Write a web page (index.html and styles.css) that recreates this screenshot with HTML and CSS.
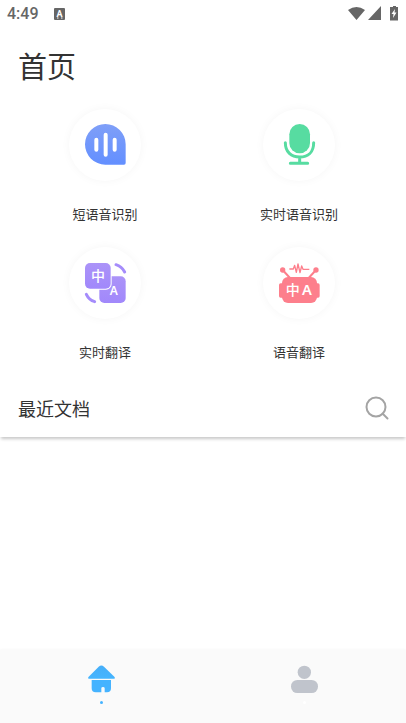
FILE: index.html
```html
<!DOCTYPE html>
<html lang="zh-CN">
<head>
<meta charset="utf-8">
<meta name="viewport" content="width=device-width, initial-scale=1">
<title>首页</title>
<link rel="stylesheet" href="styles.css">
</head>
<body>
<div class="status">
  <span class="time">4:49</span>
  <svg class="status-app" viewBox="0 0 11 12" width="11" height="12" aria-hidden="true">
    <rect width="11" height="12" rx="1" fill="#666"/>
    <text x="5.5" y="9" class="status-letter">A</text>
    <path d="M3 10h1.500M7 10h1.500" stroke="#fff"/>
  </svg>
  <svg class="status-icons" viewBox="0 0 52 16" width="52" height="16" aria-hidden="true">
    <path fill="#666" d="M0 4Q8.500-2 17 4L8.500 14ZM33 0V14H20Z"/>
    <path fill="#666" d="M45 0h3v1h2v13.500h-8V1h3Z"/>
    <path fill="#fff" d="M47 3l-3.500 5h2l-.5 4 3.500-5.500h-2Z"/>
  </svg>
</div>
<main>
  <h1>首页</h1>
  <div class="features">
    <a class="feature" href="#short">
      <svg class="disc" viewBox="27 27 216 216" aria-hidden="true">
        <defs><linearGradient id="blue" x2="0" y2="1"><stop stop-color="#7f9ff8"/><stop offset="1" stop-color="#638fff"/></linearGradient></defs>
        <path fill="url(#blue)" d="M136 72A61 61 0 1 0 136 194H192Q197 194 197 189V133A61 61 0 0 0 136 72Z"/>
        <path d="M109 119V149M137 104V164M164 119V149" stroke="#fff" stroke-width="12" stroke-linecap="round"/>
      </svg>
      <span>短语音识别</span>
    </a>
    <a class="feature" href="#live">
      <svg class="disc" viewBox="24 27 216 216" aria-hidden="true">
        <rect x="103" y="72" width="62" height="88" rx="31" fill="#57dca1"/>
        <path d="M91 128C91 156 109 171 134 171S176 156 176 128M134 171V190M106 190H158" fill="none" stroke="#57dca1" stroke-width="9" stroke-linecap="round"/>
      </svg>
      <span>实时语音识别</span>
    </a>
    <a class="feature" href="#translate">
      <svg class="disc" viewBox="27 27 216 216" aria-hidden="true">
        <defs><linearGradient id="violet" x2="0" y2="1"><stop stop-color="#ab93f8"/><stop offset="1" stop-color="#a188fb"/></linearGradient></defs>
        <rect x="118" y="115" width="79" height="80" rx="15" fill="url(#violet)"/>
        <rect x="73" y="73" width="82" height="82" rx="17" fill="#fff"/>
        <rect x="75" y="75" width="77" height="77" rx="15" fill="url(#violet)"/>
        <path d="M168 80Q185 85 194 102M79 169Q87 186 104 191" fill="none" stroke="#a58cfb" stroke-width="9" stroke-linecap="round"/>
        <text x="114" y="130" class="glyph glyph-cjk">中</text>
        <text x="161" y="172" class="glyph">A</text>
      </svg>
      <span>实时翻译</span>
    </a>
    <a class="feature" href="#voice">
      <svg class="disc" viewBox="24 27 216 216" aria-hidden="true">
        <g fill="#fd7f8c">
          <rect x="81" y="117" width="105" height="78" rx="18"/>
          <rect x="72" y="136" width="122" height="43" rx="5"/>
          <circle cx="83" cy="96" r="8"/><circle cx="183" cy="96" r="8"/>
        </g>
        <path d="M83 96L105 120M183 96L161 120" stroke="#fd7f8c" stroke-width="6"/>
        <path d="M103 93H115L119 82L124 103L129 78L135 104L140 84L144 94H163" fill="none" stroke="#fd7f8c" stroke-width="4" stroke-linejoin="round"/>
        <text x="113" y="171" class="glyph glyph-cjk">中</text>
        <text x="156" y="172" class="glyph glyph-large">A</text>
      </svg>
      <span>语音翻译</span>
    </a>
  </div>
  <div class="recent">
    <h2>最近文档</h2>
    <button class="search" type="button" aria-label="搜索">
      <svg viewBox="0 0 24 24" width="24" height="24" aria-hidden="true"><circle cx="11" cy="11" r="9.500"/><path d="M17.500 17.500L22.500 22.500"/></svg>
    </button>
  </div>
</main>
<nav class="tabs">
  <a class="tab active" href="#home" aria-label="首页">
    <svg viewBox="54 75 81 84" width="27" height="28" aria-hidden="true">
      <defs><linearGradient id="sky" x2="0" y2="1"><stop stop-color="#46aef8"/><stop offset="1" stop-color="#45b5ff"/></linearGradient></defs>
      <path fill="url(#sky)" d="M86 80Q94 73 102 80L133 110Q137 116 132 116H57Q52 116 56 110Z"/>
      <path fill="#45b3ff" d="M65 120H123V145Q123 157 111 157H104V145Q104 141 99 141T94 145V157H77Q65 157 65 145Z"/>
    </svg>
  </a>
  <a class="tab" href="#me" aria-label="我的">
    <svg viewBox="63 75 81 84" width="27" height="28" aria-hidden="true">
      <g fill="#c0c4cc"><circle cx="103" cy="97" r="20"/><rect x="63" y="120" width="81" height="39" rx="19"/></g>
    </svg>
  </a>
</nav>
</body>
</html>
```
FILE: styles.css
```css
* { box-sizing: border-box; }
body {
  margin: 0;
  min-height: 100vh;
  display: flex;
  flex-direction: column;
  background: #fff;
  color: #333;
  font-family: "Noto Sans CJK SC", sans-serif;
}
a { color: inherit; text-decoration: none; }
svg { display: block; }
h1, h2 { margin: 0; font-weight: 400; }
.status {
  display: flex;
  align-items: center;
  height: 28px;
  padding: 0 6px 0 7px;
}
.time {
  color: #666;
  font: 500 16px/28px Roboto, sans-serif;
}
.status-app { margin-left: 15px; }
.status-icons { margin-left: auto; }
.status-letter {
  fill: #fff;
  font: 700 9px Roboto, sans-serif;
  text-anchor: middle;
}
main { flex: 1; }
h1 {
  padding: 15px 18px 0;
  font-size: 29px;
  line-height: 44px;
}
.features {
  display: grid;
  grid-template-columns: 1fr 1fr;
  row-gap: 18px;
  padding: 22px 10px 0 8px;
}
.feature {
  display: flex;
  flex-direction: column;
  align-items: center;
  gap: 22px;
  font-size: 13px;
  line-height: 22px;
  padding-bottom: 4px;
}
.disc {
  width: 72px;
  height: 72px;
  border-radius: 50%;
  background: #fff;
  box-shadow: 0 0 10px rgba(0, 0, 0, 0.04);
}
.glyph {
  fill: #fff;
  font: 600 36px "Noto Sans", sans-serif;
  text-anchor: middle;
}
.glyph-large { font-size: 44px; }
.glyph-cjk { font: 500 42px "Noto Sans CJK SC", sans-serif; }
.recent {
  display: flex;
  align-items: center;
  justify-content: space-between;
  height: 58px;
  margin-top: 12px;
  padding: 0 17px 0 18px;
  box-shadow: 0 3px 3px -1px rgba(0, 0, 0, 0.22);
}
h2 { font-size: 18px; line-height: 28px; }
.search {
  padding: 0;
  border: 0;
  background: none;
}
.search svg {
  fill: none;
  stroke: #a4a4a4;
  stroke-width: 2;
  stroke-linecap: round;
}
.tabs {
  display: flex;
  height: 73px;
  background: #fafafa;
  box-shadow: 0 0 3px rgba(0, 0, 0, 0.05);
}
.tab {
  flex: 1;
  display: flex;
  flex-direction: column;
  align-items: center;
  gap: 8px;
  padding-top: 15px;
}
.tab::after {
  content: "";
  width: 3px;
  height: 3px;
  border-radius: 50%;
  background: #fff;
}
.tab.active::after { background: #45b3ff; }
```
